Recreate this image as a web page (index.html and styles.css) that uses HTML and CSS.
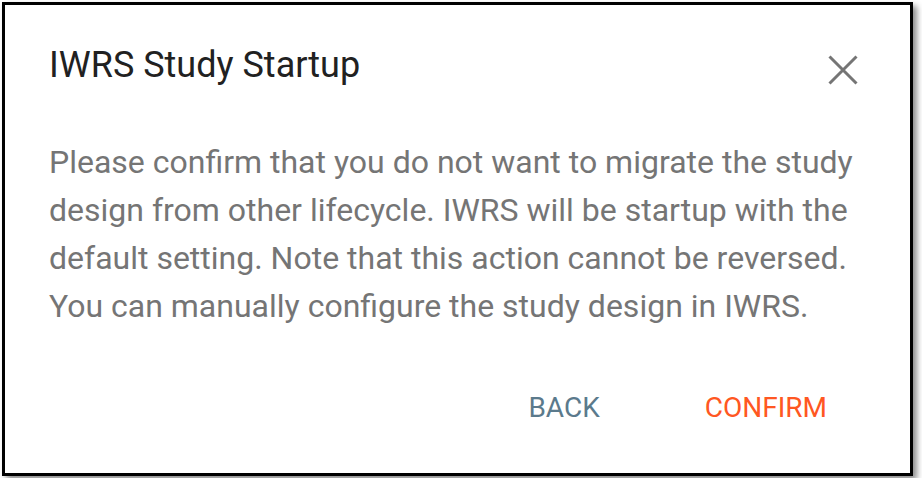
FILE: index.html
```html
<!doctype html>
<html lang="en">
<head>
    <meta charset="UTF-8">
    <meta name="viewport" content="width=device-width, initial-scale=1.0">
    <title>IWRS Study Startup</title>
    <link rel="stylesheet" href="styles.css">
</head>
<body>
    <div class="dialog">
        <div class="dialog-header">
            <h1>IWRS Study Startup</h1>
            <button class="close" type="button" aria-label="Close">
                <svg width="30" height="30" viewBox="0 0 30 30">
                    <path d="M1.5 1.5 L28.5 28.5 M28.5 1.5 L1.5 28.5" stroke="#757575" stroke-width="3" fill="none"/>
                </svg>
            </button>
        </div>

        <p class="dialog-text">
            Please confirm that you do not want to migrate the study design from other lifecycle. IWRS will be startup with the default setting. Note that this action cannot be reversed. You can manually configure the study design in IWRS.
        </p>

        <div class="dialog-actions">
            <button class="btn btn-back" type="button">Back</button>
            <button class="btn btn-confirm" type="button">Confirm</button>
        </div>
    </div>
</body>
</html>
```

FILE: styles.css
```css
body {
    font-family: 'Roboto', sans-serif;
    margin: 0;
    padding: 2px;
    background: #ffffff;
}

.dialog {
    width: 911px;
    box-sizing: border-box;
    background-color: #ffffff;
    border: 3px solid #000000;
    box-shadow: 4px 4px 6px rgba(0, 0, 0, 0.45);
    padding: 40px 52px 41px 44px;
}

.dialog-header {
    display: flex;
    justify-content: space-between;
    align-items: flex-start;
}

h1 {
    margin: 0;
    font-size: 36px;
    font-weight: 400;
    line-height: 40px;
    color: #212121;
}

.close {
    background: none;
    border: none;
    padding: 0;
    margin-top: 10px;
    width: 30px;
    height: 30px;
    cursor: pointer;
}

.close svg {
    display: block;
}

.dialog-text {
    margin: 53px -4px 0 0;
    font-size: 32px;
    line-height: 48px;
    color: #757575;
}

.dialog-actions {
    display: flex;
    justify-content: flex-end;
    gap: 73px;
    margin-top: 54px;
    margin-right: 15px;
}

.btn {
    background: none;
    border: none;
    padding: 0 16px;
    font-family: 'Roboto', sans-serif;
    font-size: 28px;
    line-height: 48px;
    text-transform: uppercase;
    cursor: pointer;
}

.btn-back {
    color: #5b7a8c;
}

.btn-confirm {
    color: #ff5722;
}
```
